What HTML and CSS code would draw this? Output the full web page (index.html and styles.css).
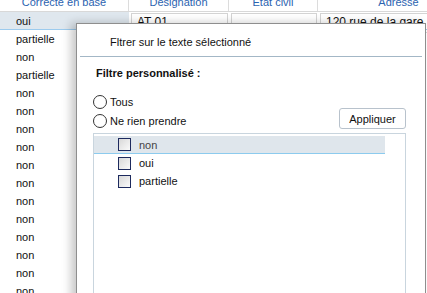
FILE: index.html
```html
<!DOCTYPE html>
<html lang="fr">
<head>
    <meta charset="UTF-8">
    <title>Filtre</title>
    <link rel="stylesheet" href="styles.css">
</head>
<body>
    <div class="grid">
        <div class="head">
            <div class="hcell c1">Correcte en base</div>
            <div class="hcell c2">Designation</div>
            <div class="hcell c3">Etat civil</div>
            <div class="hcell c4">Adresse</div>
        </div>
        <div class="row selected">
            <div class="cell c1 first">oui</div>
            <div class="cell c2"><span class="box">AT 01</span></div>
            <div class="cell c3"><span class="box"></span></div>
            <div class="cell c4"><span class="box">120 rue de la gare</span></div>
        </div>
        <div class="row"><div class="cell c1 first">partielle</div></div>
        <div class="row"><div class="cell c1 first">non</div></div>
        <div class="row"><div class="cell c1 first">partielle</div></div>
        <div class="row"><div class="cell c1 first">non</div></div>
        <div class="row"><div class="cell c1 first">non</div></div>
        <div class="row"><div class="cell c1 first">non</div></div>
        <div class="row"><div class="cell c1 first">non</div></div>
        <div class="row"><div class="cell c1 first">non</div></div>
        <div class="row"><div class="cell c1 first">non</div></div>
        <div class="row"><div class="cell c1 first">non</div></div>
        <div class="row"><div class="cell c1 first">non</div></div>
        <div class="row"><div class="cell c1 first">non</div></div>
        <div class="row"><div class="cell c1 first">non</div></div>
        <div class="row"><div class="cell c1 first">non</div></div>
        <div class="row"><div class="cell c1 first">non</div></div>
    </div>

    <div class="popup">
        <div class="popup-title">Fltrer sur le texte sélectionné</div>
        <div class="separator"></div>
        <div class="popup-body">
            <div class="label">Filtre personnalisé :</div>
            <label class="radio"><span class="circle"></span>Tous</label>
            <div class="radio-line">
                <label class="radio"><span class="circle"></span>Ne rien prendre</label>
                <button class="apply">Appliquer</button>
            </div>
            <div class="list">
                <div class="item active"><span class="check"></span><span class="item-text">non</span></div>
                <div class="item"><span class="check"></span><span class="item-text">oui</span></div>
                <div class="item"><span class="check"></span><span class="item-text">partielle</span></div>
            </div>
        </div>
    </div>
</body>
</html>
```

FILE: styles.css
```css
body {
    margin: 0;
    font-family: 'Liberation Sans', Arial, sans-serif;
    font-size: 11px;
    color: #111;
    background: #fff;
    overflow: hidden;
    width: 427px;
    height: 293px;
    position: relative;
}

.grid {
    margin-top: -7px;
    width: 480px;
}

.head {
    display: flex;
    height: 18px;
    line-height: 18px;
    border-bottom: 1px solid #d8d8d8;
    color: #2b63b0;
    font-size: 11px;
}

.hcell {
    text-align: center;
    border-right: 1px solid #dcdcdc;
    box-sizing: border-box;
    overflow: hidden;
    white-space: nowrap;
}

.c1 { width: 129px; }
.c2 { width: 100px; }
.c3 { width: 89px; }
.c4 { width: 162px; }

.row {
    display: flex;
    height: 18px;
    line-height: 18px;
}

.cell {
    box-sizing: border-box;
    white-space: nowrap;
}

.first {
    padding-left: 16px;
}

.selected {
    border-bottom: 1px solid #9ccbee;
    height: 17px;
}

.selected .first {
    background: #dfe7ee;
}

.selected .cell:not(.first) {
    padding: 1px 1px 0 2px;
}

.box {
    display: block;
    height: 18px;
    border: 1px solid #d4d4d4;
    padding-left: 5px;
    line-height: 16px;
    font-size: 12px;
}

.popup {
    position: absolute;
    left: 76px;
    top: 23px;
    width: 350px;
    height: 290px;
    box-sizing: border-box;
    background: #fff;
    border: 1px solid #8e8e8e;
    box-shadow: -5px 0 9px rgba(0, 0, 0, 0.22);
}

.popup-title {
    padding: 12px 0 0 33px;
    height: 20px;
    font-size: 11px;
}

.separator {
    height: 1px;
    background: #a3b7c6;
    margin: 0 3px 0 3px;
}

.popup-body {
    padding: 10px 19px 0 16px;
}

.label {
    font-weight: bold;
    padding-left: 3px;
    height: 14px;
    margin-bottom: 14px;
}

.radio {
    display: flex;
    align-items: center;
    gap: 3px;
    height: 14px;
}

.circle {
    width: 12px;
    height: 12px;
    border: 1px solid #333;
    border-radius: 50%;
    background: #fff;
}

.radio-line {
    display: flex;
    justify-content: space-between;
    align-items: center;
    margin-top: 1px;
    height: 22px;
}

.apply {
    font-family: inherit;
    font-size: 11px;
    width: 67px;
    height: 21px;
    border: 1px solid #b8c2cc;
    border-radius: 3px;
    background: #fff;
    color: #111;
    padding: 0;
    margin-top: -5px;
}

.list {
    margin-top: 1px;
    height: 200px;
    border: 1px solid #c9d5de;
    padding: 2px 0 0 0;
}

.item {
    display: flex;
    align-items: center;
    height: 18px;
    width: 291px;
    box-sizing: border-box;
    padding-left: 24px;
}

.item.active {
    background: #dfe6ec;
    border-bottom: 1px solid #8ccbee;
}

.check {
    width: 11px;
    height: 11px;
    border: 1px solid #1d2a5e;
    background: linear-gradient(135deg, #d8d8d8, #fafafa);
}

.item-text {
    margin-left: 8px;
}

.item.active .item-text {
    color: #444;
}
```
